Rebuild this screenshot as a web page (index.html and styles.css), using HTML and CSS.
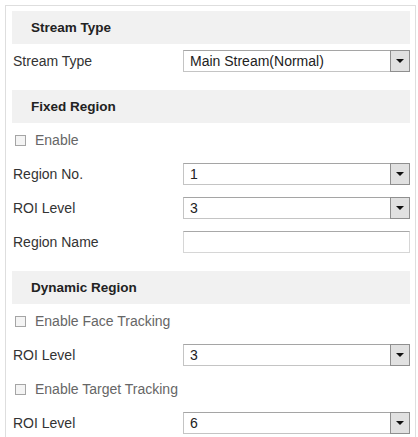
FILE: index.html
```html
<!DOCTYPE html>
<html lang="en">
  <head>
    <meta charset="UTF-8" />
    <title>ROI</title>
    <link rel="stylesheet" href="styles.css">
  </head>
  <body>
    <div class="panel">
      <div class="section-title">Stream Type</div>
      <div class="row">
        <label class="label">Stream Type</label>
        <div class="select"><span class="value">Main Stream(Normal)</span><span class="arrow"></span></div>
      </div>

      <div class="section-title gap">Fixed Region</div>
      <div class="row">
        <span class="check"></span><span class="check-label">Enable</span>
      </div>
      <div class="row">
        <label class="label">Region No.</label>
        <div class="select"><span class="value">1</span><span class="arrow"></span></div>
      </div>
      <div class="row">
        <label class="label">ROI Level</label>
        <div class="select"><span class="value">3</span><span class="arrow"></span></div>
      </div>
      <div class="row">
        <label class="label">Region Name</label>
        <div class="text-input"></div>
      </div>

      <div class="section-title gap">Dynamic Region</div>
      <div class="row">
        <span class="check"></span><span class="check-label">Enable Face Tracking</span>
      </div>
      <div class="row">
        <label class="label">ROI Level</label>
        <div class="select"><span class="value">3</span><span class="arrow"></span></div>
      </div>
      <div class="row">
        <span class="check"></span><span class="check-label">Enable Target Tracking</span>
      </div>
      <div class="row">
        <label class="label">ROI Level</label>
        <div class="select"><span class="value">6</span><span class="arrow"></span></div>
      </div>
    </div>
  </body>
</html>
```

FILE: styles.css
```css
body {
  margin: 0;
  background: #fff;
  font-family: "Liberation Sans", Arial, sans-serif;
  font-size: 14px;
  color: #333;
}
.panel {
  margin: 5px 0 0 5px;
  width: 411px;
  height: 440px;
  border: 1px solid #dedede;
  border-bottom: none;
  padding: 5px 5px 0 6px;
  box-sizing: border-box;
}
.section-title {
  height: 33px;
  line-height: 33px;
  background: #f1f1f1;
  padding-left: 19px;
  font-size: 13.5px;
  font-weight: bold;
  color: #222;
}
.section-title.gap {
  margin-top: 12px;
}
.row {
  height: 34px;
  display: flex;
  align-items: center;
  padding-left: 1px;
}
.label {
  width: 170px;
  flex: none;
}
.select {
  flex: 1;
  height: 22px;
  border: 1px solid #c4c4c4;
  border-top-color: #a5a5a5;
  box-sizing: border-box;
  display: flex;
  align-items: stretch;
  background: #fff;
}
.value {
  flex: 1;
  padding-left: 6px;
  line-height: 20px;
  color: #222;
}
.arrow {
  width: 18px;
  margin: -1px -1px -1px 0;
  background: #e1e1e1;
  border: 1px solid #8f8f8f;
  position: relative;
}
.arrow::after {
  content: "";
  position: absolute;
  left: 5px;
  top: 8px;
  border-left: 4px solid transparent;
  border-right: 4px solid transparent;
  border-top: 4px solid #111;
}
.text-input {
  flex: 1;
  height: 22px;
  border: 1px solid #d6d6d6;
  border-top-color: #a8a8a8;
  box-sizing: border-box;
}
.check {
  width: 9px;
  height: 9px;
  border: 1px solid #a5a5a5;
  background: #f4f4f4;
  margin: 0 9px 0 2px;
}
.check-label {
  color: #666;
}
```
